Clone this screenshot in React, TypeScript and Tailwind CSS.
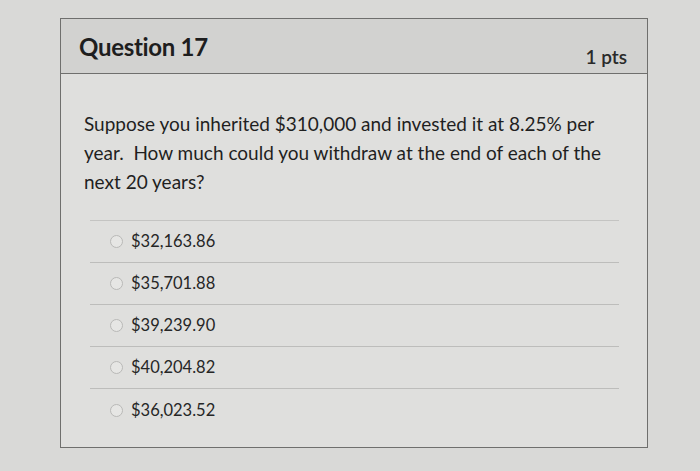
import React from 'react';

const options = ['$32,163.86', '$35,701.88', '$39,239.90', '$40,204.82', '$36,023.52'];

const Radio = () => (
  <span className="w-[13px] h-[13px] rounded-full border border-[#b9b9b7] bg-[#e6e6e4] flex-shrink-0" />
);

export default function App() {
  return (
    <div
      className="w-[700px] h-[471px] bg-[#d9d9d7] pt-[18px] pl-[60px] overflow-hidden"
      style={{ fontFamily: 'Lato, "Open Sans", sans-serif' }}
    >
      <div className="w-[588px] h-[430px] border border-[#6f6f6d] bg-[#dfdfdd] flex flex-col">
        {/* header */}
        <div className="h-[55px] bg-[#d2d2d0] border-b border-[#6f6f6d] flex items-start justify-between pl-[18px] pr-[20px]">
          <h2 className="mt-[10px] text-[24px] font-bold text-[#1e1e1e] tracking-[-0.3px]">Question 17</h2>
          <span className="mt-[24px] text-[19px] font-semibold text-[#2a2a2a]">1 pts</span>
        </div>

        {/* body */}
        <div className="pt-[35px] pl-[23px] pr-[24px]">
          <p className="text-[19px] leading-[29px] text-[#1f1f1f] whitespace-nowrap">
            Suppose you inherited $310,000 and invested it at 8.25% per
            <br />
            year.&nbsp; How much could you withdraw at the end of each of the
            <br />
            next 20 years?
          </p>

          <div className="mt-[24px] ml-[6px] mr-[4px] border-t border-[#c4c4c2]">
            {options.map((o, i) => (
              <div
                key={o}
                className={`h-[42px] flex items-center gap-[8px] pl-[20px] ${i < options.length - 1 ? 'border-b border-[#bdbdbb]' : ''}`}
              >
                <Radio />
                <span className="text-[16.5px] text-[#262626]">{o}</span>
              </div>
            ))}
          </div>
        </div>
      </div>
    </div>
  );
}
